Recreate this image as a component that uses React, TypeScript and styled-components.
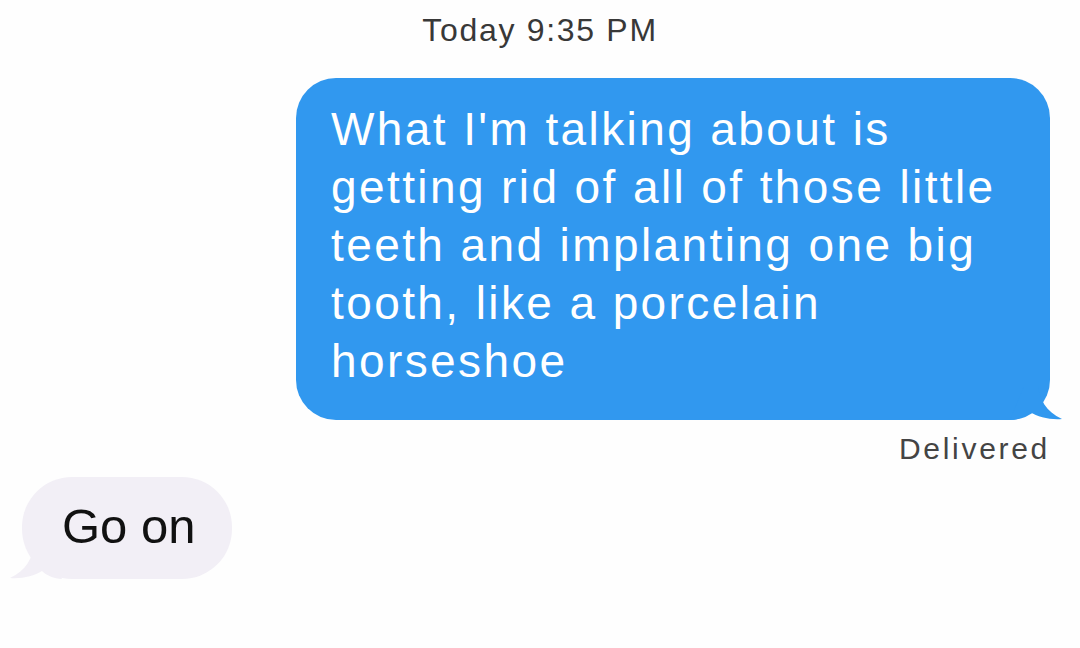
import React from "react";
import styled, { createGlobalStyle } from "styled-components";

const Global = createGlobalStyle`
  html, body { margin: 0; padding: 0; background: #ffffff; }
  body { font-family: "Liberation Sans", Arial, sans-serif; }
`;

const Screen = styled.div`
  width: 1080px;
  height: 648px;
  overflow: hidden;
  display: flex;
  flex-direction: column;
  background: #fefefe;
`;

const Stamp = styled.div`
  text-align: center;
  font-size: 32px;
  color: #383838;
  padding-top: 12px;
  line-height: 36px;
  letter-spacing: 1.7px;
`;

const Row = styled.div<{ $side: "left" | "right" }>`
  display: flex;
  justify-content: ${(p) => (p.$side === "right" ? "flex-end" : "flex-start")};
`;

const OutRow = styled(Row)`
  margin-top: 30px;
  padding-right: 30px;
`;

const InRow = styled(Row)`
  margin-top: 11px;
  padding-left: 22px;
`;

const BlueBubble = styled.div`
  position: relative;
  width: 754px;
  box-sizing: border-box;
  padding: 22px 16px 30px 35px;
  background: #3198ef;
  border-radius: 40px;
  color: #ffffff;
  font-size: 46px;
  line-height: 58px;
  letter-spacing: 2.4px;
`;

const GrayBubble = styled.div`
  position: relative;
  box-sizing: border-box;
  height: 102px;
  padding: 0 37px 4px 40px;
  display: flex;
  align-items: center;
  background: #f2eff6;
  border-radius: 50px;
  color: #111111;
  font-size: 49px;
`;

const Tail = styled.svg<{ $side: "left" | "right" }>`
  position: absolute;
  bottom: 0;
  ${(p) => (p.$side === "right" ? "right: -14px;" : "left: -14px;")}
  width: 40px;
  height: 34px;
  overflow: visible;
`;

const Status = styled.div`
  text-align: right;
  padding-right: 30px;
  margin-top: 12px;
  font-size: 30px;
  line-height: 34px;
  color: #444444;
  letter-spacing: 2.7px;
`;

const lines = [
  "What I'm talking about is",
  "getting rid of all of those little",
  "teeth and implanting one big",
  "tooth, like a porcelain",
  "horseshoe",
];

const Line = styled.div`
  white-space: nowrap;
`;

export default function App() {
  return (
    <Screen>
      <Global />
      <Stamp>Today 9:35 PM</Stamp>
      <OutRow $side="right">
        <BlueBubble>
          {lines.map((l) => (
            <Line key={l}>{l}</Line>
          ))}
          <Tail $side="right" viewBox="0 0 40 34">
            <path d="M0 0 L14 0 C15 12 22 26 38 33 C26 34 14 31 6 26 C2 30 -6 34 -14 34 Z" fill="#3198ef" />
          </Tail>
        </BlueBubble>
      </OutRow>
      <Status>Delivered</Status>
      <InRow $side="left">
        <GrayBubble>
          Go on
          <Tail $side="left" viewBox="0 0 40 34">
            <path d="M40 0 L26 0 C25 12 18 26 2 33 C14 34 26 31 34 26 C38 30 46 34 54 34 Z" fill="#f2eff6" />
          </Tail>
        </GrayBubble>
      </InRow>
    </Screen>
  );
}
